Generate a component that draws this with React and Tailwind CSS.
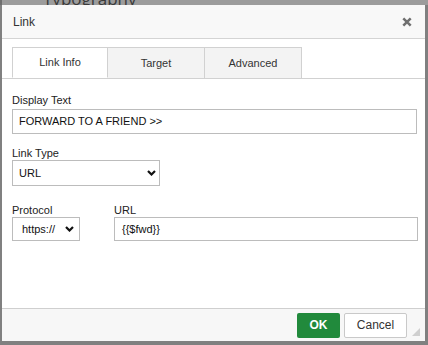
import React from 'react';

function Chevron() {
  return (
    <svg width="9" height="6" viewBox="0 0 9 6" className="shrink-0">
      <path d="M1 1 L4.5 4.5 L8 1" fill="none" stroke="#111" strokeWidth="2.2" />
    </svg>
  );
}

export default function App() {
  return (
    <div className="w-[428px] h-[345px] bg-[#808080] overflow-hidden font-['Liberation_Sans',Arial,sans-serif] text-[11px] text-[#222]">
      <div className="h-[5px] overflow-hidden flex">
        <div className="w-[2px] bg-[#6e6e6e]" />
        <div className="flex-1 bg-[#9c9c9c] pl-[41px] overflow-hidden">
          <div className="text-[17px] leading-[17px] -mt-[10px] text-[#3a3a3a] font-['Open_Sans',sans-serif]">Typography</div>
        </div>
      </div>
      <div className="ml-[2px] w-[423px] h-[336px] bg-white flex flex-col">
        <div className="h-[34px] bg-[#f8f8f8] border-b border-[#d4d4d4] flex items-center justify-between pl-[11px] pr-[13px]">
          <span className="text-[12px] text-[#333]">Link</span>
          <svg width="10" height="10" viewBox="0 0 10 10">
            <path d="M1.3 1.3 L8.7 8.7 M8.7 1.3 L1.3 8.7" stroke="#6f6f6f" strokeWidth="2.5" />
          </svg>
        </div>
        <div className="pt-[8px] border-b border-[#d1d1d1] flex pl-[10px]">
          <div className="w-[96px] h-[31px] -mb-px bg-white border border-[#d1d1d1] border-b-white flex items-center justify-center text-[#333]">Link Info</div>
          <div className="w-[97px] h-[31px] bg-[#f3f3f3] border-y border-r border-[#d1d1d1] border-b-0 flex items-center justify-center text-[#333]">Target</div>
          <div className="w-[97px] h-[31px] bg-[#f3f3f3] border-y border-r border-[#d1d1d1] border-b-0 flex items-center justify-center text-[#333]">Advanced</div>
        </div>
        <div className="flex-1 px-[10px] pt-[15px]">
          <div className="leading-[13px]">Display Text</div>
          <div className="mt-[2px] h-[25px] w-[405px] border border-[#bcbcbc] flex items-center pl-[6px] text-[#111]">FORWARD TO A FRIEND &gt;&gt;</div>
          <div className="mt-[13px] leading-[13px]">Link Type</div>
          <div className="h-[26px] w-[148px] border border-[#bcbcbc] flex items-center justify-between pl-[6px] pr-[3px] text-[#111]">
            <span>URL</span>
            <Chevron />
          </div>
          <div className="mt-[18px] flex gap-[34px]">
            <div>
              <div className="leading-[13px]">Protocol</div>
              <div className="h-[24px] w-[68px] border border-[#bcbcbc] flex items-center justify-between pl-[9px] pr-[5px] text-[#111]">
                <span>https://</span>
                <Chevron />
              </div>
            </div>
            <div>
              <div className="leading-[13px]">URL</div>
              <div className="h-[24px] w-[304px] border border-[#bcbcbc] flex items-center pl-[7px] text-[#111]">{'{{$fwd}}'}</div>
            </div>
          </div>
        </div>
        <div className="h-[33px] bg-[#f7f7f7] border-t border-[#cfcfcf] flex justify-end pr-[5px]">
          <div className="flex items-center gap-[4px]">
            <div className="w-[43px] h-[25px] bg-[#218a3c] text-white font-bold text-[12px] flex items-center justify-center rounded-[2px]">OK</div>
            <div className="w-[63px] h-[25px] bg-white border border-[#c9c9c9] text-[#333] text-[12px] flex items-center justify-center rounded-[2px]">Cancel</div>
          </div>
          <svg width="8" height="8" viewBox="0 0 8 8" className="self-end mb-[5px] ml-[5px]">
            <path d="M8 0 L8 8 L0 8 Z" fill="#cfcfcf" />
          </svg>
        </div>
      </div>
    </div>
  );
}
